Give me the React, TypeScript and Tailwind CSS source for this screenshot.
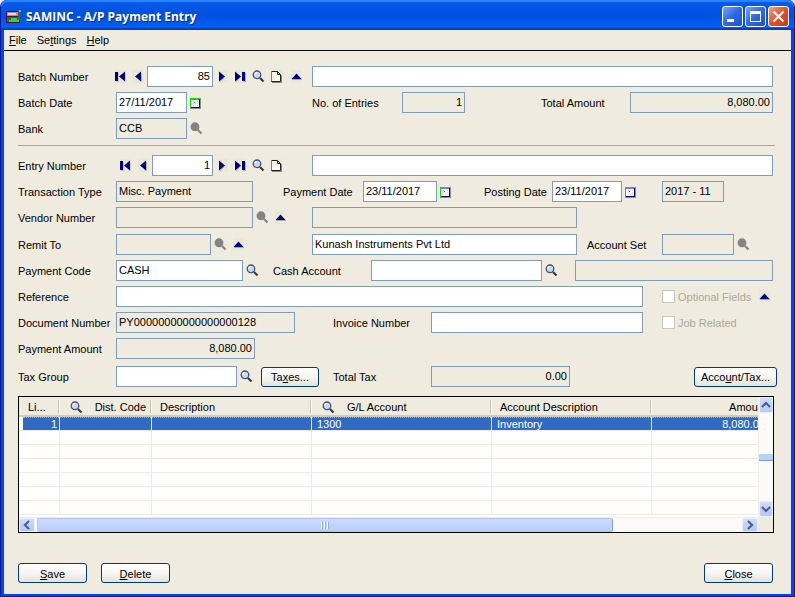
import type { InputHTMLAttributes, ReactNode } from "react";

type FieldProps = InputHTMLAttributes<HTMLInputElement> & { right?: boolean };

function Field({ className = "", right, readOnly, ...rest }: FieldProps) {
  return (
    <input
      type="text"
      readOnly={readOnly}
      className={`block h-[21px] min-w-0 shrink-0 rounded-none border border-[#7f9db9] px-[2px] pb-[2px] text-[11px] leading-4 text-black outline-none ${
        readOnly ? "bg-[#efebde]" : "bg-white"
      } ${right ? "text-right" : "text-left"} ${className}`}
      {...rest}
    />
  );
}

function Label({ htmlFor, className = "", children }: { htmlFor: string; className?: string; children: ReactNode }) {
  return (
    <label htmlFor={htmlFor} className={`shrink-0 whitespace-nowrap pt-px ${className}`}>
      {children}
    </label>
  );
}

function Row({ children }: { children: ReactNode }) {
  return <div className="flex h-[21px] items-center">{children}</div>;
}

const SHAPES: Record<string, ReactNode> = {
  first: (
    <>
      <path d="M4 5h3v9H4z" fill="#c4c3b8" />
      <path d="M13.500 5v9L9 10z" fill="#b4b3a8" />
      <path d="M3 4h3v9H3z" fill="#00007b" />
      <path d="M13 3.500v10L7 8.500z" fill="#00007b" />
    </>
  ),
  prev: (
    <>
      <path d="M11 5h1v9l-3-2z" fill="#b4b3a8" />
      <path d="M11 3.500v10L5 8.500z" fill="#00007b" />
    </>
  ),
  next: (
    <>
      <path d="M6 14.500v-3l5-2.500z" fill="#b4b3a8" />
      <path d="M5 3.500v10l6-5z" fill="#00007b" />
    </>
  ),
  last: (
    <>
      <path d="M11 5h3v9h-3zM4 14.500v-3L9 9z" fill="#b4b3a8" />
      <path d="M3 3.500v10l6-5zM10 4h3v9h-3z" fill="#00007b" />
    </>
  ),
  up: (
    <>
      <path d="M4 11h10v1H4z" fill="#a9a99e" />
      <path d="M8.500 5.500L13.500 11h-10z" fill="#00007b" />
    </>
  ),
  page: (
    <>
      <path d="M4 14h9V7h1v8H4z" fill="#8a8a80" />
      <path d="M3.500 3.500h6l3 3v7h-9z" fill="#fbfae8" stroke="#222" />
      <path d="M9.500 3.500v3h3" fill="none" stroke="#222" />
      <path d="M3 3h1v10H3z" fill="#777" />
    </>
  ),
};

function Magnifier({ off }: { off?: boolean }) {
  return (
    <svg viewBox="0 0 16 16" className="block h-4 w-4" aria-hidden="true">
      <path d="M10 10l3.500 3.500" stroke={off ? "#848484" : "#3a3a3a"} strokeWidth="2.200" />
      <circle cx="7" cy="6.800" r="3.800" fill={off ? "#848484" : "#c4daf8"} stroke={off ? "#848484" : "#4b5170"} strokeWidth="1.300" />
      {!off && <path d="M5 6.500a2 2 0 0 1 2-2" stroke="#fff" fill="none" strokeWidth="1.200" />}
    </svg>
  );
}

function IconButton({ icon, label, className = "w-[18px]" }: { icon: string; label: string; className?: string }) {
  return (
    <button type="button" aria-label={label} className={`flex h-[17px] shrink-0 items-start justify-center ${className}`}>
      {icon === "find" || icon === "find-off" ? (
        <Magnifier off={icon === "find-off"} />
      ) : (
        <svg viewBox="0 0 16 16" className="block h-4 w-4" aria-hidden="true">
          <path d="M3 2h11v13H3z" fill="#e9e8d8" />
          {SHAPES[icon]}
        </svg>
      )}
    </button>
  );
}

function CalendarButton({ label }: { label: string }) {
  return (
    <button type="button" aria-label={label} className="ml-[3px] flex h-[13px] w-[11px] shrink-0 items-end">
      <svg viewBox="0 0 11 11" shapeRendering="crispEdges" className="h-[11px] w-[11px]" aria-hidden="true">
        <path d="M0 0h11v11H0z" fill="#8c8c94" />
        <path d="M0 0h10v1H1v9H0z" fill="#00e600" />
        <path d="M1 1h9v9H1z" fill="#00007c" />
        <path d="M1 2h8v7H1z" fill="#fff" />
        <path d="M1 1h8v1H1z" fill="#6a7cf8" />
        <path d="M3 7h1v1H3zM5 7h1v1H5zM7 7h1v1H7zM7 5h1v1H7zM7 3h1v1H7zM3 5h1v1H3zM3 3h1v1H3z" fill="#dcd8c8" />
        <path d="M4 4h1v1H4z" fill="#f000f0" />
      </svg>
    </button>
  );
}

function PushButton({ className = "", children }: { className?: string; children: ReactNode }) {
  return (
    <button
      type="button"
      className={`flex h-5 shrink-0 items-center justify-center whitespace-nowrap rounded-[3px] border border-[#003c74] bg-linear-to-b from-white via-[#f7f6f3] to-[#e6e2d8] pt-px ${className}`}
    >
      {children}
    </button>
  );
}

function Key({ children }: { children: ReactNode }) {
  return <span className="underline underline-offset-1">{children}</span>;
}

function DisabledCheck({ id, children }: { id: string; children: ReactNode }) {
  return (
    <>
      <input
        id={id}
        type="checkbox"
        disabled
        className="h-[13px] w-[13px] shrink-0 appearance-none border border-[#cac8bb] bg-white"
      />
      <Label htmlFor={id} className="pl-[3px] text-[#aca899]">
        {children}
      </Label>
    </>
  );
}

function CaptionButton({ label, close, children }: { label: string; close?: boolean; children: ReactNode }) {
  return (
    <button
      type="button"
      aria-label={label}
      className={`h-[21px] w-[21px] rounded-[3px] border border-white ${
        close
          ? "bg-linear-to-br from-[#f0a088] via-[#e0502c] to-[#c43c14]"
          : "bg-linear-to-br from-[#7ba4f4] via-[#2f67e4] to-[#1c50d0]"
      }`}
    >
      <svg viewBox="0 0 19 19" shapeRendering={close ? "auto" : "crispEdges"} className="h-[19px] w-[19px]" aria-hidden="true">
        {children}
      </svg>
    </button>
  );
}

function ScrollButton({ label, d, className }: { label: string; d: string; className: string }) {
  return (
    <button
      type="button"
      aria-label={label}
      className={`flex shrink-0 items-center justify-center rounded-[2px] border border-[#e8effd] bg-linear-to-b from-[#cfdcfd] to-[#b4c8f6] ${className}`}
    >
      <svg viewBox="0 0 10 10" className="h-[10px] w-[10px]" aria-hidden="true">
        <path d={d} fill="none" stroke="#4d6185" strokeWidth="2.200" />
      </svg>
    </button>
  );
}

function Head({ className = "", last, children }: { className?: string; last?: boolean; children?: ReactNode }) {
  return (
    <th className="h-5 border-b-2 border-[#d0ccbc] bg-[#efebde] p-0 font-normal">
      <div className="flex h-[18px] items-center">
        <div className={`flex min-w-0 flex-1 items-center whitespace-nowrap pt-[2px] ${className}`}>{children}</div>
        {!last && <span className="h-[13px] w-[2px] border-l border-r border-l-[#c5c2b2] border-r-white" />}
      </div>
    </th>
  );
}

const LINES = [
  ["1", "", "", "1300", "Inventory", "8,080.00"],
  ...Array.from({ length: 6 }, () => ["", "", "", "", "", ""]),
];

export default function App() {
  return (
    <div className="min-h-screen bg-[#e8e8f0]">
      <div className="flex min-h-screen flex-col overflow-hidden rounded-t-[7px] bg-[#0018a0] px-px pb-[2px] font-['Liberation_Sans',Arial,sans-serif] text-[11px] leading-4 text-black">
        <header className="flex h-[30px] items-center rounded-t-[6px] bg-linear-to-b from-[#0a5be8] via-[#0050e0] to-[#0064f8] px-[5px] pt-[3px] shadow-[inset_0_2px_1px_#2a86ff,inset_0_-2px_1px_#0040c0]">
          <svg viewBox="0 0 16 16" shapeRendering="crispEdges" className="h-4 w-4" aria-hidden="true">
            <path d="M0 2h14v12H0z" fill="#4a1440" />
            <path d="M1 3h12v4H1z" fill="#b888a8" />
            <path d="M2 4h8v2H2z" fill="#ead4e2" />
            <path d="M1 8h12v5H1z" fill="#3a6048" />
            <path d="M3 11h10v2H3zM5 9h6v2H5z" fill="#28d840" />
            <path d="M12 2h2v9h-2z" fill="#6a5a20" />
            <path d="M13 1h2v2h-2z" fill="#90c850" />
          </svg>
          <h1 className="flex-1 whitespace-nowrap pl-1 font-['Open_Sans','Noto_Sans',sans-serif] text-[12px] font-bold leading-4 text-white [text-shadow:1px_1px_0_#0a2a80]">
            SAMINC - A/P Payment Entry
          </h1>
          <div className="flex gap-[2px]">
            <CaptionButton label="Minimize">
              <path d="M4 12h7v3H4z" fill="#fff" />
            </CaptionButton>
            <CaptionButton label="Maximize">
              <path d="M4 4h11v11H4zM5 7v7h9V7z" fill="#fff" fillRule="evenodd" />
            </CaptionButton>
            <CaptionButton label="Close window" close>
              <path d="M4.500 4.500l10 10M14.500 4.500l-10 10" stroke="#fff" strokeWidth="2.200" />
            </CaptionButton>
          </div>
        </header>

        <div className="flex flex-1 flex-col border-x-3 border-b-2 border-[#0046e8] bg-[#efebde]">
          <nav className="flex h-[21px] items-center gap-[10px] border-b border-black pl-[5px]">
            <button type="button"><Key>F</Key>ile</button>
            <button type="button">Se<Key>t</Key>tings</button>
            <button type="button"><Key>H</Key>elp</button>
          </nav>

          <main className="flex flex-1 flex-col pb-[11px] pl-[14px] pr-[18px] pt-[15px]">
            <section className="flex flex-col gap-[5px]">
              <Row>
                <Label htmlFor="batch" className="w-[94px]">Batch Number</Label>
                <IconButton icon="first" label="First batch" className="w-4" />
                <IconButton icon="prev" label="Previous batch" className="w-[19px]" />
                <Field id="batch" right defaultValue="85" className="w-[66px]" />
                <IconButton icon="next" label="Next batch" />
                <IconButton icon="last" label="Last batch" />
                <IconButton icon="find" label="Find batch" />
                <IconButton icon="page" label="New batch" />
                <IconButton icon="up" label="Zoom batch" className="w-[22px]" />
                <Field aria-label="Batch description" className="ml-[5px] flex-1" />
              </Row>
              <Row>
                <Label htmlFor="bdate" className="w-[98px]">Batch Date</Label>
                <Field id="bdate" defaultValue="27/11/2017" className="w-[71px]" />
                <CalendarButton label="Pick batch date" />
                <Label htmlFor="entries" className="ml-[111px] w-[90px]">No. of Entries</Label>
                <Field id="entries" readOnly right defaultValue="1" className="w-[63px]" />
                <Label htmlFor="total" className="ml-auto w-[89px]">Total Amount</Label>
                <Field id="total" readOnly right defaultValue="8,080.00" className="w-[143px]" />
              </Row>
              <Row>
                <Label htmlFor="bank" className="w-[98px]">Bank</Label>
                <Field id="bank" readOnly defaultValue="CCB" className="w-[71px]" />
                <IconButton icon="find-off" label="Find bank" />
              </Row>
            </section>

            <hr className="-mr-[2px] mb-[9px] mt-[6px] border-t border-[#aca899]" />

            <section className="flex flex-col gap-[5px]">
              <Row>
                <Label htmlFor="entry" className="w-[99px]">Entry Number</Label>
                <IconButton icon="first" label="First entry" className="w-4" />
                <IconButton icon="prev" label="Previous entry" className="w-[19px]" />
                <Field id="entry" right defaultValue="1" className="w-[61px]" />
                <IconButton icon="next" label="Next entry" />
                <IconButton icon="last" label="Last entry" />
                <IconButton icon="find" label="Find entry" />
                <IconButton icon="page" label="New entry" />
                <Field aria-label="Entry description" className="ml-[27px] flex-1" />
              </Row>
              <Row>
                <Label htmlFor="ttype" className="w-[98px]">Transaction Type</Label>
                <Field id="ttype" readOnly defaultValue="Misc. Payment" className="w-[137px]" />
                <Label htmlFor="pdate" className="ml-[30px] w-[80px]">Payment Date</Label>
                <Field id="pdate" defaultValue="23/11/2017" className="w-[74px]" />
                <CalendarButton label="Pick payment date" />
                <Label htmlFor="postdate" className="ml-[33px] w-[68px]">Posting Date</Label>
                <Field id="postdate" defaultValue="23/11/2017" className="w-[70px]" />
                <CalendarButton label="Pick posting date" />
                <Field aria-label="Fiscal period" readOnly defaultValue="2017 - 11" className="ml-[26px] w-[62px]" />
              </Row>
              <Row>
                <Label htmlFor="vendor" className="w-[98px]">Vendor Number</Label>
                <Field id="vendor" readOnly className="w-[137px]" />
                <IconButton icon="find-off" label="Find vendor" />
                <IconButton icon="up" label="Zoom vendor" />
                <Field aria-label="Vendor name" readOnly className="ml-[23px] w-[265px]" />
              </Row>
            </section>

            <section className="mt-[6px] flex flex-col gap-[5px]">
              <Row>
                <Label htmlFor="remit" className="w-[98px]">Remit To</Label>
                <Field id="remit" readOnly className="w-[95px]" />
                <IconButton icon="find-off" label="Find remit-to" />
                <IconButton icon="up" label="Zoom remit-to" />
                <Field aria-label="Remit-to name" defaultValue="Kunash Instruments Pvt Ltd" className="ml-[65px] w-[265px]" />
                <Label htmlFor="acctset" className="ml-[10px] w-[75px]">Account Set</Label>
                <Field id="acctset" readOnly className="w-[72px]" />
                <IconButton icon="find-off" label="Find account set" />
              </Row>
              <Row>
                <Label htmlFor="pcode" className="w-[98px]">Payment Code</Label>
                <Field id="pcode" defaultValue="CASH" className="w-[127px]" />
                <IconButton icon="find" label="Find payment code" />
                <Label htmlFor="cash" className="ml-3 w-[98px]">Cash Account</Label>
                <Field id="cash" className="w-[171px]" />
                <IconButton icon="find" label="Find cash account" />
                <Field aria-label="Cash account name" readOnly className="ml-[15px] flex-1" />
              </Row>
              <Row>
                <Label htmlFor="ref" className="w-[98px]">Reference</Label>
                <Field id="ref" className="w-[527px]" />
                <span className="ml-[19px] flex items-center">
                  <DisabledCheck id="optional">Optional Fields</DisabledCheck>
                </span>
                <span className="ml-auto">
                  <IconButton icon="up" label="Zoom optional fields" />
                </span>
              </Row>
              <Row>
                <Label htmlFor="doc" className="w-[98px]">Document Number</Label>
                <Field id="doc" readOnly defaultValue="PY00000000000000000128" className="w-[179px]" />
                <Label htmlFor="invoice" className="ml-[38px] w-[98px]">Invoice Number</Label>
                <Field id="invoice" className="w-[212px]" />
                <span className="ml-[19px] flex items-center">
                  <DisabledCheck id="job">Job Related</DisabledCheck>
                </span>
              </Row>
              <Row>
                <Label htmlFor="amount" className="w-[98px]">Payment Amount</Label>
                <Field id="amount" readOnly right defaultValue="8,080.00" className="w-[139px]" />
              </Row>
            </section>

            <section className="-mr-1 mt-[7px]">
              <Row>
                <Label htmlFor="taxgroup" className="w-[98px]">Tax Group</Label>
                <Field id="taxgroup" className="w-[121px]" />
                <IconButton icon="find" label="Find tax group" />
                <PushButton className="ml-[6px] w-[58px]">Ta<Key>x</Key>es...</PushButton>
                <Label htmlFor="totaltax" className="ml-[14px] w-[98px]">Total Tax</Label>
                <Field id="totaltax" readOnly right defaultValue="0.00" className="w-[139px]" />
                <PushButton className="ml-auto w-[83px]">Acco<Key>u</Key>nt/Tax...</PushButton>
              </Row>
            </section>

            <section className="-mr-px mt-[9px] flex border border-black bg-white">
              <div className="min-w-0 flex-1">
                <div className="h-[121px] overflow-hidden border-b border-[#efebde]">
                  <table className="w-[752px] min-w-full table-fixed border-separate border-spacing-0 text-left">
                    <colgroup>
                      <col className="w-1" />
                      <col className="w-[37px]" />
                      <col className="w-[92px]" />
                      <col className="w-[160px]" />
                      <col className="w-[180px]" />
                      <col className="w-[160px]" />
                      <col />
                    </colgroup>
                    <thead>
                      <tr>
                        <Head last />
                        <Head className="pl-[5px]">Li...</Head>
                        <Head className="justify-between pl-2 pr-1">
                          <Magnifier />
                          Dist. Code
                        </Head>
                        <Head className="pl-2">Description</Head>
                        <Head className="gap-[11px] pl-2">
                          <Magnifier />
                          G/L Account
                        </Head>
                        <Head className="pl-2">Account Description</Head>
                        <Head last className="justify-end pr-1">Amount</Head>
                      </tr>
                    </thead>
                    <tbody>
                      {LINES.map((cells, row) => (
                        <tr key={row} className={row === 0 ? "text-white" : ""}>
                          <td className="h-[14px] border-b border-[#efebde] p-0" />
                          {cells.map((cell, col) => (
                            <td
                              key={col}
                              className={`h-[14px] border-b border-r border-[#efebde] p-0 ${row === 0 ? "bg-[#316ac5]" : ""} ${
                                col === 0 || col === 5 ? "text-right" : ""
                              }`}
                            >
                              <div
                                className={`h-[13px] whitespace-nowrap leading-[13px] ${
                                  row === 0 ? "border-t border-dotted border-[#e0a050]" : ""
                                } ${col === 0 ? "pr-[2px]" : "px-[5px]"}`}
                              >
                                {cell}
                              </div>
                            </td>
                          ))}
                        </tr>
                      ))}
                    </tbody>
                  </table>
                </div>
                <div className="flex h-[14px] bg-[#fcfbf9]">
                  <ScrollButton label="Scroll left" d="M7 1L3 5l4 4" className="w-4" />
                  <div className="flex flex-1">
                    <div className="ml-[2px] flex w-[81.5%] items-center justify-center gap-px rounded-[2px] border border-[#b0c4f4] border-r-[#7f9fd8] bg-linear-to-b from-[#cddafe] to-[#b8cffc]">
                      <span className="h-[7px] w-[2px] border-l border-r border-l-white border-r-[#8cb0f8]" />
                      <span className="h-[7px] w-[2px] border-l border-r border-l-white border-r-[#8cb0f8]" />
                      <span className="h-[7px] w-[2px] border-l border-r border-l-white border-r-[#8cb0f8]" />
                    </div>
                  </div>
                  <ScrollButton label="Scroll right" d="M3 1l4 4-4 4" className="w-4" />
                </div>
              </div>
              <div className="flex w-[15px] shrink-0 flex-col border-l border-[#f0efe8] bg-[#fbfaf6]">
                <ScrollButton label="Scroll up" d="M1 7l4-4 4 4" className="h-4" />
                <div className="flex flex-1 flex-col pt-10">
                  <div className="h-[8px] border-b border-t border-b-[#7f9fd8] border-t-white bg-[#bccffa]" />
                </div>
                <ScrollButton label="Scroll down" d="M1 3l4 4 4-4" className="h-4" />
                <div className="h-[15px] bg-[#efebde]" />
              </div>
            </section>

            <footer className="flex gap-[14px] pt-[30px]">
              <PushButton className="w-[69px]"><Key>S</Key>ave</PushButton>
              <PushButton className="w-[69px]"><Key>D</Key>elete</PushButton>
              <PushButton className="ml-auto w-[69px]"><Key>C</Key>lose</PushButton>
            </footer>
          </main>
        </div>
      </div>
    </div>
  );
}
